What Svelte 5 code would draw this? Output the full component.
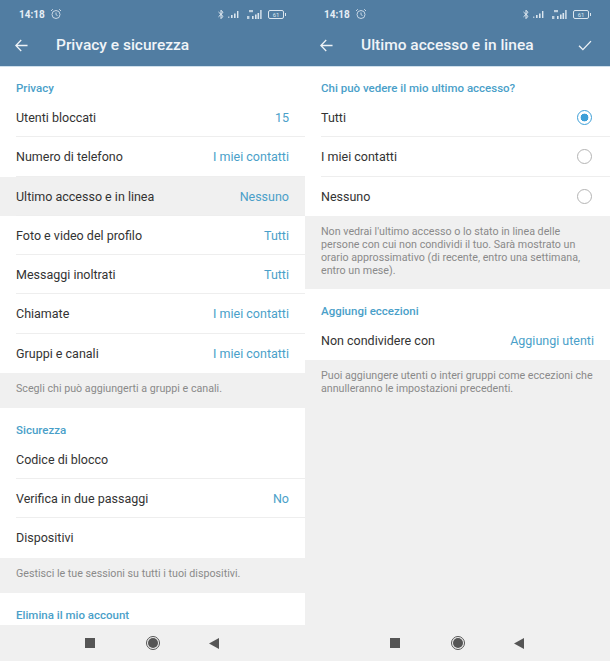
<script>
  const privacy = [
    { label: "Utenti bloccati", value: "15" },
    { label: "Numero di telefono", value: "I miei contatti" },
    { label: "Ultimo accesso e in linea", value: "Nessuno", active: true },
    { label: "Foto e video del profilo", value: "Tutti" },
    { label: "Messaggi inoltrati", value: "Tutti" },
    { label: "Chiamate", value: "I miei contatti" },
    { label: "Gruppi e canali", value: "I miei contatti", last: true }
  ];
  const security = [
    { label: "Codice di blocco", value: "" },
    { label: "Verifica in due passaggi", value: "No" },
    { label: "Dispositivi", value: "", last: true }
  ];
  const options = [
    { label: "Tutti", checked: true },
    { label: "I miei contatti" },
    { label: "Nessuno", last: true }
  ];
</script>

{#snippet statusBar()}
  <div class="status">
    <div class="status-left">
      <span class="time">14:18</span>
      <svg width="12" height="12" viewBox="0 0 12 12" fill="none" stroke="#c9d8e6" stroke-width="1">
        <circle cx="6" cy="6.5" r="4" />
        <path d="M6 4.5V6.7L7.5 7.5M1 3 2.8 1.2M11 3 9.2 1.2" />
      </svg>
    </div>
    <div class="status-right">
      <svg width="6" height="11" viewBox="0 0 6 11" fill="none" stroke="#e4ecf3" stroke-width="1">
        <path d="M.5 3 5 7.4 3 9.6V1.2L5 3.4.5 7.8" />
      </svg>
      <svg width="11" height="7" viewBox="0 0 11 7" fill="#dbe6ef">
        <rect x="0" y="5.5" width="1.4" height="1.5" opacity=".7" />
        <rect x="3" y="4" width="1.6" height="3" />
        <rect x="6" y="2.5" width="1.6" height="4.5" />
        <rect x="9" y="0" width="1.4" height="7" />
      </svg>
      <svg class="sim" width="15" height="9" viewBox="0 0 15 9" fill="#dbe6ef">
        <rect x="2" y="0" width="4" height="2.2" opacity=".8" />
        <rect x="0" y="6" width="2.4" height="3" opacity=".8" />
        <rect x="5" y="6" width="1.6" height="3" />
        <rect x="8" y="4.5" width="1.6" height="4.5" />
        <rect x="10.5" y="3" width="1.6" height="6" />
        <rect x="13.2" y="0" width="1.4" height="9" />
      </svg>
      <span class="battery"><span>61</span></span>
    </div>
  </div>
{/snippet}

{#snippet navBar()}
  <div class="nav">
    <span class="nav-square"></span>
    <span class="nav-circle"></span>
    <svg class="nav-back" width="10" height="11" viewBox="0 0 10 11" fill="#555"><path d="M10 0V11L0 5.5Z" /></svg>
  </div>
{/snippet}

{#snippet backArrow()}
  <svg class="back" width="13" height="13" viewBox="0 0 14 14" fill="none" stroke="#eef3f7" stroke-width="1.4">
    <path d="M13.5 7H1M6.7 1 .9 7l5.8 6" />
  </svg>
{/snippet}

<div class="screen">
  <section class="panel">
    <header>
      {@render statusBar()}
      <div class="toolbar">
        {@render backArrow()}
        <h1>Privacy e sicurezza</h1>
      </div>
    </header>
    <div class="content">
      <div class="card">
        <h2>Privacy</h2>
        {#each privacy as row}
          <div class="row" class:active={row.active} class:last={row.last}>
            <span>{row.label}</span>
            <span class="value">{row.value}</span>
          </div>
        {/each}
      </div>
      <p class="hint">Scegli chi può aggiungerti a gruppi e canali.</p>
      <div class="card">
        <h2>Sicurezza</h2>
        {#each security as row}
          <div class="row" class:last={row.last}>
            <span>{row.label}</span>
            <span class="value">{row.value}</span>
          </div>
        {/each}
      </div>
      <p class="hint">Gestisci le tue sessioni su tutti i tuoi dispositivi.</p>
      <div class="card">
        <h2>Elimina il mio account</h2>
      </div>
    </div>
    {@render navBar()}
  </section>

  <section class="panel">
    <header>
      {@render statusBar()}
      <div class="toolbar">
        {@render backArrow()}
        <h1>Ultimo accesso e in linea</h1>
        <svg class="check" width="14" height="11" viewBox="0 0 15 12" fill="none" stroke="#eef3f7" stroke-width="1.5">
          <path d="M1 6.2 5.2 10.5 14 1.2" />
        </svg>
      </div>
    </header>
    <div class="content">
      <div class="card">
        <h2>Chi può vedere il mio ultimo accesso?</h2>
        {#each options as opt}
          <div class="row" class:last={opt.last}>
            <span>{opt.label}</span>
            <span class="radio" class:checked={opt.checked}></span>
          </div>
        {/each}
      </div>
      <p class="hint tall">Non vedrai l'ultimo accesso o lo stato in linea delle persone con cui non condividi il tuo. Sarà mostrato un orario approssimativo (di recente, entro una settimana, entro un mese).</p>
      <div class="card">
        <h2>Aggiungi eccezioni</h2>
        <div class="row last">
          <span>Non condividere con</span>
          <span class="value">Aggiungi utenti</span>
        </div>
      </div>
      <p class="hint tall">Puoi aggiungere utenti o interi gruppi come eccezioni che annulleranno le impostazioni precedenti.</p>
    </div>
    {@render navBar()}
  </section>
</div>

<style>
  :global(body) {
    margin: 0;
    background: #f0f0f0;
  }

  .screen {
    display: grid;
    grid-template-columns: 305px 305px;
    width: 610px;
    height: 661px;
    overflow: hidden;
    font-family: Roboto, "Liberation Sans", sans-serif;
    font-size: 12.5px;
    color: #333;
  }

  .panel {
    display: flex;
    flex-direction: column;
    height: 661px;
    background: #f0f0f0;
  }

  header {
    flex: none;
    height: 66px;
    background: #517da2;
    color: #fff;
    box-shadow: 0 1px 0 #cfe0ec;
    position: relative;
    z-index: 1;
  }

  .status {
    display: flex;
    justify-content: space-between;
    align-items: center;
    height: 28px;
    padding: 0 19px;
  }

  .status-left {
    display: flex;
    align-items: center;
    gap: 5px;
    font-size: 10px;
    font-weight: 700;
    color: #e6eef5;
  }

  .status-right {
    display: flex;
    align-items: center;
    gap: 4px;
  }

  .sim {
    margin-left: 4px;
  }

  .battery {
    position: relative;
    display: flex;
    align-items: center;
    justify-content: center;
    width: 14px;
    height: 7px;
    margin: 0 2px;
    border: 1px solid #dbe6ef;
    border-radius: 2px;
    font-size: 6px;
    color: #dbe6ef;
  }

  .battery::after {
    content: "";
    position: absolute;
    right: -3px;
    top: 2px;
    width: 1px;
    height: 3px;
    background: #dbe6ef;
  }

  .toolbar {
    display: flex;
    align-items: center;
    height: 34px;
    padding: 0 18px 0 15px;
  }

  .back {
    flex: none;
  }

  h1 {
    margin: 0 0 0 28px;
    flex: 1;
    font-size: 15.5px;
    font-weight: 500;
    color: #f0f4f8;
  }

  .content {
    flex: 1;
    min-height: 0;
    overflow: hidden;
  }

  .card {
    background: #fff;
  }

  h2 {
    margin: 0;
    height: 32px;
    padding: 15px 16px 0;
    box-sizing: border-box;
    font-size: 11.5px;
    line-height: 14px;
    font-weight: 500;
    color: #4a9fc9;
  }

  .row {
    position: relative;
    display: flex;
    justify-content: space-between;
    align-items: center;
    box-sizing: border-box;
    height: 39.25px;
    padding: 0 16px;
  }

  .row::after {
    content: "";
    position: absolute;
    left: 16px;
    right: 0;
    bottom: 0;
    height: 1px;
    background: #eeeeee;
  }

  .row.last::after {
    display: none;
  }

  .row.active {
    background: #f0f0f0;
  }

  .value {
    color: #4a9fc9;
  }

  .radio {
    box-sizing: border-box;
    width: 15px;
    height: 15px;
    margin-right: 2px;
    border: 1.4px solid #b4b4b4;
    border-radius: 50%;
  }

  .radio.checked {
    border: 1.6px solid #3d9fd8;
    background: radial-gradient(circle, #3d9fd8 0 3.6px, transparent 4.2px);
  }

  .hint {
    margin: 0;
    padding: 9px 16px 0;
    height: 35px;
    box-sizing: border-box;
    font-size: 10.7px;
    line-height: 13px;
    color: #8a8a8a;
  }

  .hint.tall {
    height: auto;
    padding: 9px 16px 12px;
  }

  .nav {
    flex: none;
    display: flex;
    justify-content: center;
    align-items: center;
    gap: 53px;
    height: 36px;
    padding-right: 2px;
    background: #f0f0f0;
  }

  .nav-back {
    margin-left: -2px;
  }

  .nav-square {
    width: 10px;
    height: 10px;
    background: #555;
  }

  .nav-circle {
    box-sizing: border-box;
    width: 10px;
    height: 10px;
    border-radius: 50%;
    background: #555;
    outline: 1px solid #555;
    outline-offset: 1.5px;
  }
</style>
